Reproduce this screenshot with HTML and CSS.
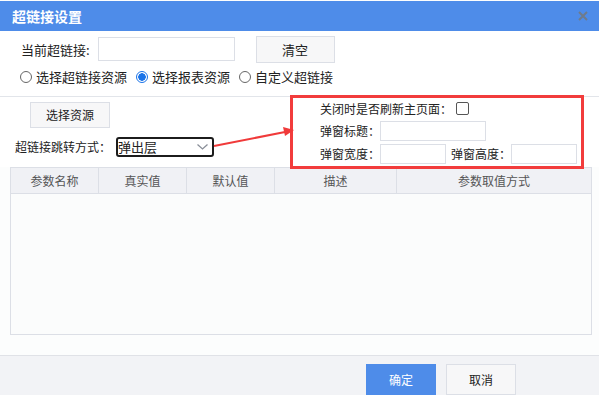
FILE: index.html
```html
<!DOCTYPE html>
<html lang="zh-CN">
<head>
    <meta charset="UTF-8">
    <title>超链接设置</title>
    <link rel="stylesheet" href="styles.css">
</head>
<body>
    <div class="dialog">
        <div class="titlebar">
            <span class="title">超链接设置</span>
            <svg class="close" width="10" height="10" viewBox="0 0 10 10">
                <path d="M1 1L9 9M9 1L1 9" stroke="#6f7b8b" stroke-width="2"/>
            </svg>
        </div>

        <div class="link-row">
            <span class="label">当前超链接:</span>
            <div class="input link-input"></div>
            <div class="button clear-btn">清空</div>
        </div>
        <div class="radio-row">
            <span class="radio"></span><span class="radio-text">选择超链接资源</span>
            <span class="radio checked"></span><span class="radio-text">选择报表资源</span>
            <span class="radio"></span><span class="radio-text">自定义超链接</span>
        </div>

        <div class="options">
            <div class="left">
                <div class="button res-btn">选择资源</div>
                <div class="jump-row">
                    <span class="label">超链接跳转方式：</span>
                    <div class="select">
                        <span>弹出层</span>
                        <svg width="11" height="6" viewBox="0 0 11 6">
                            <path d="M0.5 0.5L5.5 5L10.5 0.5" fill="none" stroke="#8a8f99" stroke-width="1.3"/>
                        </svg>
                    </div>
                </div>
            </div>
            <div class="right">
                <div class="popup-row">
                    <span class="label">关闭时是否刷新主页面：</span>
                    <span class="checkbox"></span>
                </div>
                <div class="popup-row">
                    <span class="label">弹窗标题：</span>
                    <div class="input title-input"></div>
                </div>
                <div class="popup-row">
                    <span class="label">弹窗宽度：</span>
                    <div class="input size-input"></div>
                    <span class="label height-label">弹窗高度：</span>
                    <div class="input size-input"></div>
                </div>
                <div class="highlight"></div>
            </div>
            <svg class="arrow" width="300" height="72" viewBox="0 0 300 72">
                <path d="M214 49L285 35" stroke="#f03a3a" stroke-width="2"/>
                <path d="M294 33L283 30L285 39Z" fill="#f03a3a"/>
            </svg>
        </div>

        <div class="params">
            <div class="param-head">
                <div class="col c1">参数名称</div>
                <div class="col c2">真实值</div>
                <div class="col c3">默认值</div>
                <div class="col c4">描述</div>
                <div class="col c5">参数取值方式</div>
            </div>
            <div class="param-body"></div>
        </div>

        <div class="footer">
            <div class="button primary">确定</div>
            <div class="button cancel">取消</div>
        </div>
    </div>
</body>
</html>
```

FILE: styles.css
```css
body {
    margin: 0;
    font-family: "Microsoft YaHei", "Noto Sans CJK SC", sans-serif;
    font-size: 12px;
    color: #222;
    background: #fff;
}
.dialog {
    width: 599px;
    height: 395px;
    display: flex;
    flex-direction: column;
    overflow: hidden;
    background: #fcfdfd;
}
.titlebar {
    margin-top: 1px;
    height: 30px;
    background: #4e8ce9;
    display: flex;
    align-items: center;
    justify-content: space-between;
    padding: 0 12px;
}
.title {
    color: #fff;
    font-size: 14px;
    font-weight: bold;
}
.close {
    margin-right: -1px;
}
.link-row {
    background: #fff;
    display: flex;
    align-items: center;
    height: 27px;
    padding: 5px 0 0 21px;
    font-size: 13px;
}
.label {
    white-space: nowrap;
}
.input {
    background: #fff;
    border: 1px solid #dcdfe6;
    box-sizing: border-box;
}
.link-input {
    width: 137px;
    height: 24px;
    margin-left: 8px;
}
.button {
    box-sizing: border-box;
    display: flex;
    align-items: center;
    justify-content: center;
    background: #f7f7f8;
    border: 1px solid #dcdfe6;
    color: #222;
}
.clear-btn {
    width: 79px;
    height: 27px;
    margin-left: 21px;
}
.radio-row {
    background: #fff;
    display: flex;
    align-items: center;
    height: 16px;
    padding: 6px 0 11px 20px;
    border-bottom: 1px solid #e2e5ea;
    font-size: 13px;
}
.radio {
    width: 12px;
    height: 12px;
    border: 1px solid #666;
    border-radius: 50%;
    box-sizing: border-box;
    margin-right: 4px;
}
.radio.checked {
    border-color: #1a73e8;
    background: radial-gradient(circle, #1a73e8 0 3.5px, #fff 4px);
}
.radio-text {
    margin-right: 9px;
}
.options {
    position: relative;
    display: flex;
    height: 70px;
    background: #fff;
}
.left {
    width: 290px;
    padding: 5px 0 0 15px;
    box-sizing: border-box;
}
.res-btn {
    width: 80px;
    height: 26px;
    margin-left: 15px;
}
.jump-row {
    display: flex;
    align-items: center;
    margin-top: 9px;
}
.select {
    width: 98px;
    height: 20px;
    box-sizing: border-box;
    border: 2px solid #1c1c1c;
    border-radius: 3px;
    margin-left: 5px;
    display: flex;
    align-items: center;
    justify-content: space-between;
    padding: 0 4px 0 0;
    line-height: 1;
    font-size: 13px;
}
.right {
    position: relative;
    flex: 1;
    padding: 5px 0 0 30px;
}
.popup-row {
    display: flex;
    align-items: center;
    height: 20px;
    margin-bottom: 3px;
}
.popup-row:first-child {
    height: 14px;
    margin-bottom: 5px;
}
.checkbox {
    width: 13px;
    height: 13px;
    box-sizing: border-box;
    border: 1px solid #555;
    border-radius: 2px;
    margin-left: 4px;
}
.title-input {
    width: 106px;
    height: 20px;
}
.size-input {
    width: 66px;
    height: 20px;
}
.height-label {
    margin-left: 5px;
}
.highlight {
    position: absolute;
    left: 0;
    top: -2px;
    width: 294px;
    height: 74px;
    box-sizing: border-box;
    border: 3px solid #f23c3c;
}
.arrow {
    position: absolute;
    left: 0;
    top: 0;
}
.params {
    margin-left: 10px;
    width: 582px;
    height: 169px;
    box-sizing: border-box;
    border: 1px solid #dcdfe6;
    display: flex;
    flex-direction: column;
}
.param-head {
    display: flex;
    height: 25px;
    background: #f0f1f5;
    border-bottom: 1px solid #dcdfe6;
}
.col {
    display: flex;
    align-items: center;
    justify-content: center;
    color: #555;
    border-right: 1px solid #dcdfe6;
}
.c1, .c2, .c3 { width: 87px; }
.c4 { width: 121px; }
.c5 { flex: 1; border-right: none; }
.param-body {
    flex: 1;
    background: #fbfcfc;
}
.footer {
    margin-top: 20px;
    flex: 1;
    border-top: 1px solid #e0e2e7;
    background: #f2f3f6;
    display: flex;
    justify-content: flex-end;
    padding: 8px 83px 0 0;
    gap: 10px;
}
.footer .button {
    width: 70px;
    height: 31px;
}
.button.primary {
    background: #4e8ce9;
    border-color: #4e8ce9;
    color: #fff;
}
```
